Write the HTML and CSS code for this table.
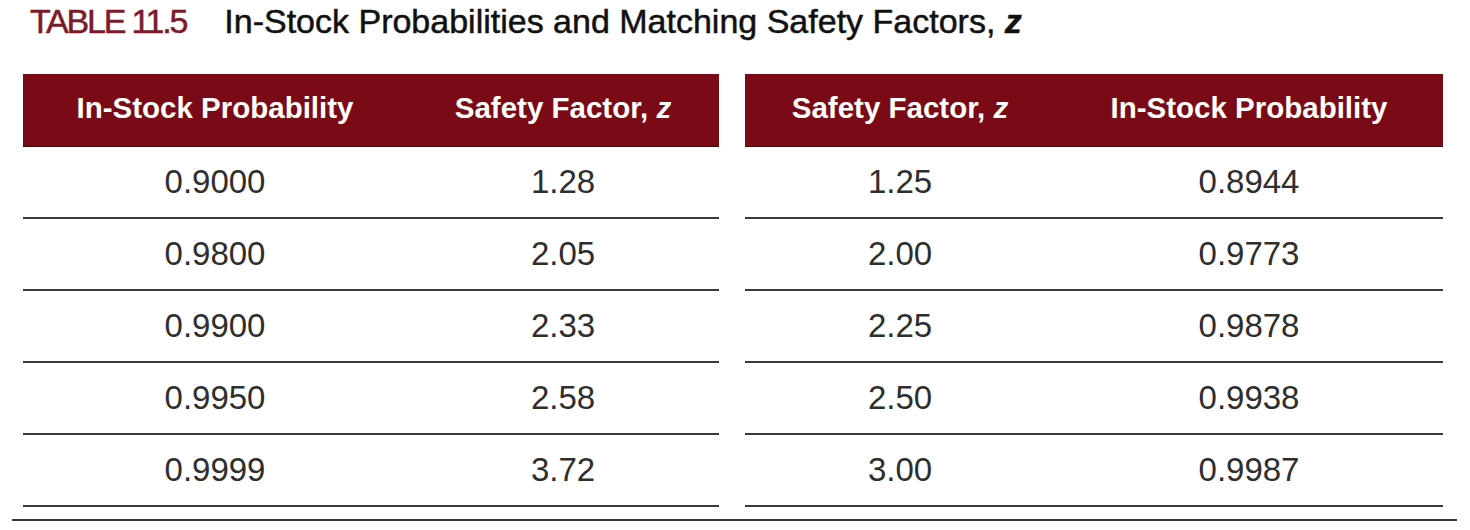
FILE: index.html
```html
<!DOCTYPE html>
<html lang="en">
<head>
<meta charset="utf-8">
<title>Table 11.5</title>
<link rel="stylesheet" href="styles.css">
</head>
<body>
<div class="page">
  <h1 class="title"><span class="label">TABLE 11.5</span><span class="caption">In-Stock Probabilities and Matching Safety Factors, <i class="z">z</i></span></h1>
  <div class="tables">
    <div class="tbl tbl-left">
      <div class="hd"><span>In-Stock Probability</span></div><div class="hd"><span>Safety Factor, <i class="z">z</i></span></div>
      <div class="cell">0.9000</div><div class="cell">1.28</div>
      <div class="cell">0.9800</div><div class="cell">2.05</div>
      <div class="cell">0.9900</div><div class="cell">2.33</div>
      <div class="cell">0.9950</div><div class="cell">2.58</div>
      <div class="cell">0.9999</div><div class="cell">3.72</div>
    </div>
    <div class="tbl tbl-right">
      <div class="hd"><span>Safety Factor, <i class="z">z</i></span></div><div class="hd"><span>In-Stock Probability</span></div>
      <div class="cell">1.25</div><div class="cell">0.8944</div>
      <div class="cell">2.00</div><div class="cell">0.9773</div>
      <div class="cell">2.25</div><div class="cell">0.9878</div>
      <div class="cell">2.50</div><div class="cell">0.9938</div>
      <div class="cell">3.00</div><div class="cell">0.9987</div>
    </div>
  </div>
  <div class="rule"></div>
</div>
</body>
</html>
```
FILE: styles.css
```css
html, body {
  margin: 0;
  padding: 0;
  background: #ffffff;
}
body {
  font-family: "Liberation Sans", Arial, sans-serif;
  width: 1470px;
  height: 530px;
  overflow: hidden;
}
.page {
  display: flex;
  flex-direction: column;
}
.title {
  margin: 0;
  padding: 1px 0 0 30px;
  height: 40px;
  line-height: 40px;
  font-size: 34px;
  font-weight: normal;
  white-space: nowrap;
  display: flex;
  gap: 38px;
  -webkit-text-stroke: 0.5px currentColor;
}
.label {
  color: #7b1a2b;
  letter-spacing: -2.2px;
}
.caption {
  color: #111111;
}
.z {
  font-weight: bold;
  font-style: italic;
}
.tables {
  display: flex;
  gap: 26px;
  margin-top: 33px;
  padding-left: 23px;
}
.tbl {
  display: grid;
  grid-template-rows: 73px;
  grid-auto-rows: 72px;
}
.tbl-left {
  width: 696px;
  grid-template-columns: 384px 312px;
}
.tbl-right {
  width: 698px;
  grid-template-columns: 310px 388px;
}
.hd {
  background: #7a0b16;
  color: #ffffff;
  font-weight: bold;
  font-size: 29.5px;
  letter-spacing: 0;
  display: flex;
  align-items: center;
  justify-content: center;
  padding-bottom: 5px;
  box-sizing: border-box;
  border-bottom: 1px solid #3a0a0e;
  white-space: nowrap;
}
.cell {
  display: flex;
  align-items: center;
  justify-content: center;
  font-size: 33px;
  color: #2e2e2e;
  border-bottom: 2px solid #3a3a3a;
  box-sizing: border-box;
}
.rule {
  margin: 12px 0 0 12px;
  width: 1445px;
  height: 2px;
  background: #3a3a3a;
}
```
